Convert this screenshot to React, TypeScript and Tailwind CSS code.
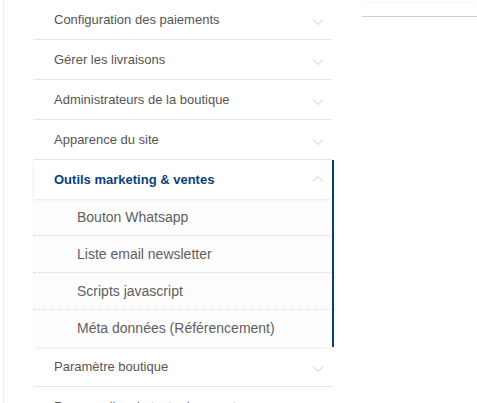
import React from "react";

const before = [
  "Configuration des paiements",
  "Gérer les livraisons",
  "Administrateurs de la boutique",
  "Apparence du site",
];

const subItems = [
  "Bouton Whatsapp",
  "Liste email newsletter",
  "Scripts javascript",
  "Méta données (Référencement)",
];

const after = ["Paramètre boutique", "Personnaliser le texte du compte"];

function Chevron({ up = false }: { up?: boolean }) {
  return (
    <svg
      width="12"
      height="7"
      viewBox="0 0 12 7"
      fill="none"
      className={up ? "mt-[-2px]" : "mt-[5px]"}
    >
      <path
        d={up ? "M1 6.5 L6 1.5 L11 6.5" : "M1 0.5 L6 5.5 L11 0.5"}
        stroke="#c8c8c8"
        strokeWidth="1"
      />
    </svg>
  );
}

function MenuRow({ label }: { label: string }) {
  return (
    <div className="flex h-10 w-[298px] shrink-0 items-center border-b border-[#e6e6e6] pl-5 pr-2 text-[13px] text-[#555]">
      <span>{label}</span>
      <span className="ml-auto">
        <Chevron />
      </span>
    </div>
  );
}

export default function App() {
  return (
    <div
      className="flex h-[403px] w-[477px] overflow-hidden bg-white"
      style={{ fontFamily: '"Liberation Sans", Arial, sans-serif' }}
    >
      {/* left gutter */}
      <div className="flex w-[34px] shrink-0 pl-[3px]">
        <div className="h-full border-l border-[#ececec]" />
      </div>

      {/* side menu */}
      <div className="flex w-[300px] shrink-0 flex-col items-start">
        {before.map((l) => (
          <MenuRow key={l} label={l} />
        ))}

        <div className="relative z-10 flex w-[300px] shrink-0 flex-col border-r-2 border-[#0b3f7a] shadow-[0_2px_3px_rgba(0,0,0,0.06)]">
          <div className="relative z-10 flex h-[39px] items-center bg-white pl-5 pr-2 text-[13px] font-bold text-[#0b3f7a] shadow-[0_1px_3px_rgba(0,0,0,0.09)]">
            <span>Outils marketing &amp; ventes</span>
            <span className="ml-auto">
              <Chevron up />
            </span>
          </div>
          <div className="flex flex-col bg-[#fdfdfd]">
            {subItems.map((s, i) => (
              <div
                key={s}
                className={
                  "flex h-[37px] items-center pl-[43px] text-[14px] text-[#5f5f5f] " +
                  (i < subItems.length - 1 ? "border-b border-dotted border-[#d8d8d8]" : "")
                }
              >
                {s}
              </div>
            ))}
          </div>
        </div>

        {after.map((l) => (
          <MenuRow key={l} label={l} />
        ))}
      </div>

      {/* right panel */}
      <div className="ml-[28px] flex flex-1 flex-col">
        <div className="h-[2px] shadow-[0_1px_2px_rgba(0,0,0,0.035)]" />
        <div className="mt-[14px] border-t border-[#cfcfcf]" />
      </div>
    </div>
  );
}
